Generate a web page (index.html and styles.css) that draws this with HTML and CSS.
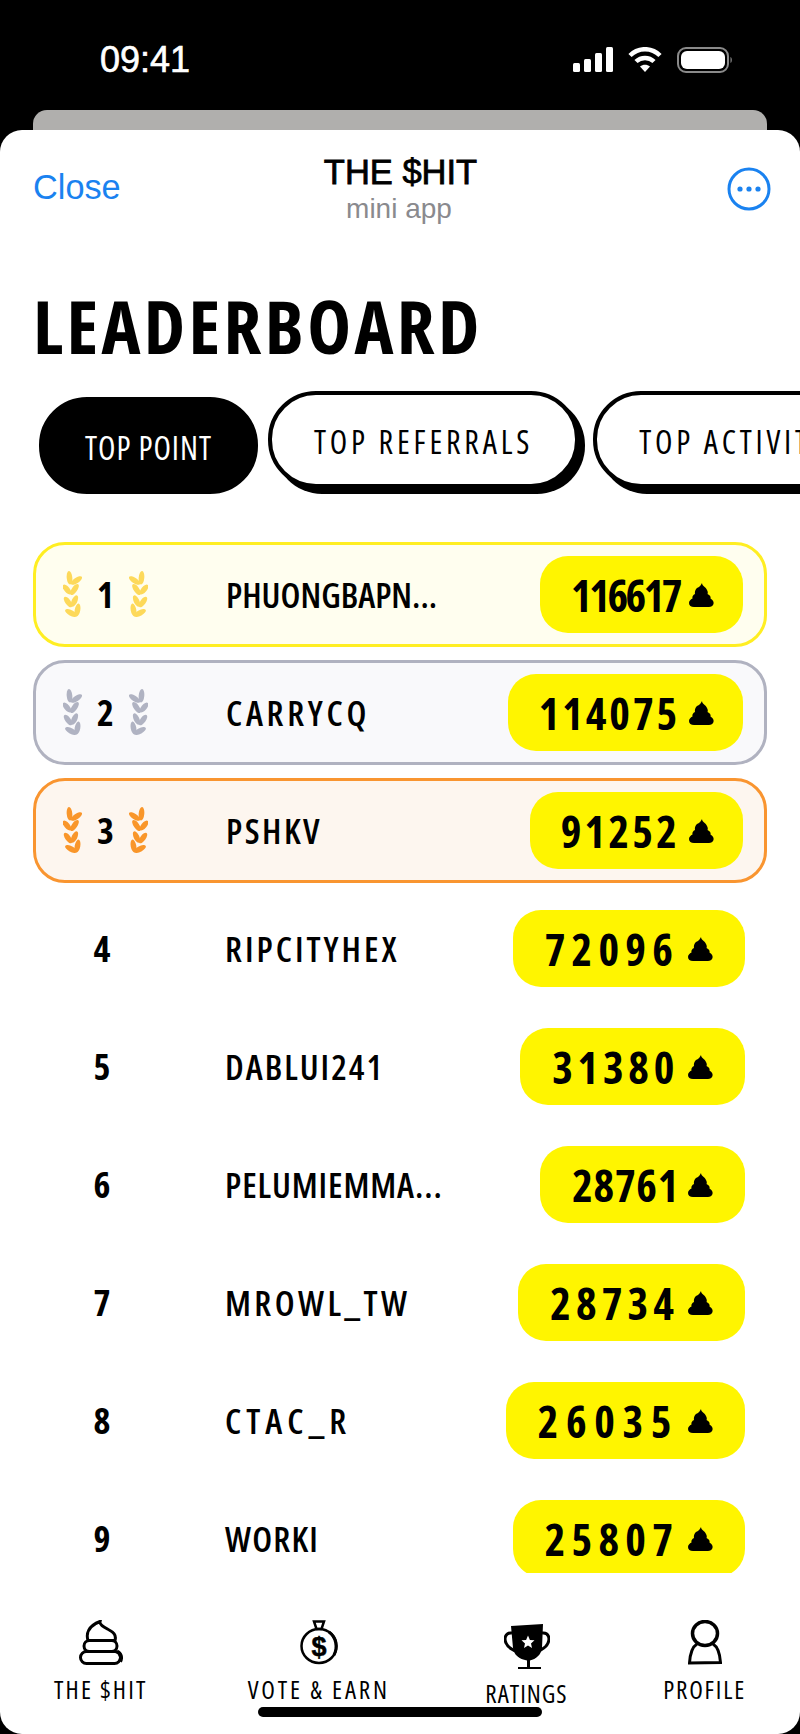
FILE: index.html
```html
<!DOCTYPE html>
<html lang="en">
<head>
<meta charset="utf-8">
<title>THE $HIT – Leaderboard</title>
<link rel="stylesheet" href="styles.css">
</head>
<body>
<svg class="defs" width="0" height="0" aria-hidden="true">
  <symbol id="wheat" viewBox="0 0 19 47">
    <ellipse cx="6.500" cy="6.800" rx="2.800" ry="6.800" transform="rotate(-5 6.500 6.800)"/>
    <ellipse cx="13.500" cy="9.500" rx="2.700" ry="6.500" transform="rotate(55 13.500 9.500)"/>
    <ellipse cx="4" cy="18.500" rx="2.800" ry="6" transform="rotate(-40 4 18.500)"/>
    <ellipse cx="11.500" cy="18.500" rx="2.800" ry="6.500" transform="rotate(35 11.500 18.500)"/>
    <ellipse cx="5" cy="31" rx="2.800" ry="6.200" transform="rotate(-35 5 31)"/>
    <ellipse cx="11.500" cy="30" rx="2.800" ry="6.200" transform="rotate(25 11.500 30)"/>
    <ellipse cx="14.500" cy="39" rx="2.800" ry="6.500" transform="rotate(10 14.500 39)"/>
    <ellipse cx="8" cy="42" rx="2.800" ry="6.500" transform="rotate(-62 8 42)"/>
  </symbol>
  <symbol id="poop" viewBox="0 0 25 24">
    <path d="M13 0C13 3 17 4 18 7C19 9 19 10 18.500 11C21 12 22 14 21.500 15.500C24 17 25 19 24.500 21C24 23 22 24 20 24H5C2 24 0 22.500 0 20C0 18 1.500 16.500 3.500 15.500C3 13.500 4 12 6 11C5.500 8 7 5 10 4C11 3 12 2 13 0Z"/>
  </symbol>
</svg>

<header class="status">
  <span class="time">09:41</span>
  <svg class="status-icons" width="160" height="26" viewBox="0 0 160 26">
    <g fill="#fff">
      <rect x="0" y="16" width="7" height="9" rx="1.500"/>
      <rect x="11" y="12" width="7" height="13" rx="1.500"/>
      <rect x="22" y="6" width="7" height="19" rx="1.500"/>
      <rect x="33" y="0" width="7" height="25" rx="1.500"/>
      <path d="M67 19.500L72 25L77 19.500C74 17 70 17 67 19.500Z"/>
    </g>
    <g fill="none" stroke="#fff" stroke-width="4.500">
      <path d="M57 8.500A21 21 0 0 1 87 8.500"/>
      <path d="M63 14.500A13 13 0 0 1 81 14.500"/>
    </g>
    <rect x="105" y="1" width="50" height="24" rx="8" fill="none" stroke="#8a8a8a" stroke-width="2"/>
    <rect x="108" y="4" width="44" height="18" rx="6" fill="#fff"/>
    <path d="M157.500 10C159 10.500 159.500 15 157.500 16Z" fill="#8a8a8a"/>
  </svg>
</header>
<div class="backcard"></div>

<main class="sheet">
  <div class="topbar">
    <a class="close">Close</a>
    <div class="title-block">
      <div class="title">THE $HIT</div>
      <div class="subtitle">mini app</div>
    </div>
    <svg class="more" width="44" height="44" viewBox="0 0 44 44">
      <circle cx="22" cy="22" r="20" fill="none" stroke="#1a82f0" stroke-width="3"/>
      <circle cx="13" cy="22" r="2.600" fill="#1a82f0"/>
      <circle cx="22" cy="22" r="2.600" fill="#1a82f0"/>
      <circle cx="31" cy="22" r="2.600" fill="#1a82f0"/>
    </svg>
  </div>

  <h1 class="heading">LEADERBOARD</h1>

  <div class="tabs">
    <div class="tab tab-active">TOP POINT</div>
    <div class="tab">TOP REFERRALS</div>
    <div class="tab">TOP ACTIVITY</div>
  </div>

  <div class="list">
    <div class="row row-top row-gold">
      <div class="rank"><svg class="wheat"><use href="#wheat"/></svg><span>1</span><svg class="wheat wheat-flip"><use href="#wheat"/></svg></div>
      <div class="name">PHUONGBAPN...</div>
      <div class="score"><span class="num">116617</span><svg class="coin"><use href="#poop"/></svg></div>
    </div>
    <div class="row row-top row-silver">
      <div class="rank"><svg class="wheat"><use href="#wheat"/></svg><span>2</span><svg class="wheat wheat-flip"><use href="#wheat"/></svg></div>
      <div class="name">CARRYCQ</div>
      <div class="score"><span class="num">114075</span><svg class="coin"><use href="#poop"/></svg></div>
    </div>
    <div class="row row-top row-bronze">
      <div class="rank"><svg class="wheat"><use href="#wheat"/></svg><span>3</span><svg class="wheat wheat-flip"><use href="#wheat"/></svg></div>
      <div class="name">PSHKV</div>
      <div class="score"><span class="num">91252</span><svg class="coin"><use href="#poop"/></svg></div>
    </div>
    <div class="row">
      <div class="rank"><span>4</span></div>
      <div class="name">RIPCITYHEX</div>
      <div class="score"><span class="num">72096</span><svg class="coin"><use href="#poop"/></svg></div>
    </div>
    <div class="row">
      <div class="rank"><span>5</span></div>
      <div class="name">DABLUI241</div>
      <div class="score"><span class="num">31380</span><svg class="coin"><use href="#poop"/></svg></div>
    </div>
    <div class="row">
      <div class="rank"><span>6</span></div>
      <div class="name">PELUMIEMMA...</div>
      <div class="score"><span class="num">28761</span><svg class="coin"><use href="#poop"/></svg></div>
    </div>
    <div class="row">
      <div class="rank"><span>7</span></div>
      <div class="name">MROWL_TW</div>
      <div class="score"><span class="num">28734</span><svg class="coin"><use href="#poop"/></svg></div>
    </div>
    <div class="row">
      <div class="rank"><span>8</span></div>
      <div class="name">CTAC_R</div>
      <div class="score"><span class="num">26035</span><svg class="coin"><use href="#poop"/></svg></div>
    </div>
    <div class="row">
      <div class="rank"><span>9</span></div>
      <div class="name">WORKI</div>
      <div class="score"><span class="num">25807</span><svg class="coin"><use href="#poop"/></svg></div>
    </div>
  </div>

  <nav class="nav">
    <div class="nav-item">
      <svg class="nav-icon" width="44" height="45" viewBox="0 0 44 45" fill="none" stroke="#000" stroke-width="3">
        <path fill="#fff" d="M21 1.500C20 5 27 8 31 10.500C36 13 37 17 36 20.500H9C7 14 9 6 21 1.500Z"/>
        <rect x="5" y="20.500" width="33" height="11" rx="5.500" fill="#fff"/>
        <rect x="1.500" y="31.500" width="40" height="12" rx="6" fill="#fff"/>
        <path d="M38 31.500C42 33 43 38 41 41.500" stroke-width="4"/>
      </svg>
      <span class="nav-label">THE $HIT</span>
    </div>
    <div class="nav-item">
      <svg class="nav-icon" width="40" height="45" viewBox="0 0 40 45" fill="none" stroke="#000" stroke-width="2.500">
        <path d="M15 1.500H25L22.500 9H17.500Z"/>
        <ellipse cx="20" cy="26" rx="17.500" ry="17"/>
        <path d="M30 12C37 17 39 27 35 35" stroke-width="3"/>
        <text class="dollar" x="20" y="36" text-anchor="middle">$</text>
      </svg>
      <span class="nav-label">VOTE &amp; EARN</span>
    </div>
    <div class="nav-item nav-item-low">
      <svg class="nav-icon" width="46" height="45" viewBox="0 0 46 45">
        <path fill="none" stroke="#000" stroke-width="3" d="M8 9C1 8 0 15 2 19C4 24 8 25 11 27M38 9C45 8 46 15 44 19C42 24 38 25 35 27"/>
        <path d="M7 2L39 0L38 24C37 31 32 35 26 36.500V43H37V45H14V43H23V36.500C15 35 10 31 9 24Z"/>
        <path fill="#fff" d="M24 11.500L25.900 15.900L30.500 16.300L27 19.400L28 24L24 21.600L20 24L21 19.400L17.500 16.300L22.100 15.900Z"/>
      </svg>
      <span class="nav-label">RATINGS</span>
    </div>
    <div class="nav-item">
      <svg class="nav-icon" width="34" height="45" viewBox="0 0 34 45" fill="none" stroke="#000" stroke-width="3">
        <ellipse cx="17" cy="13.500" rx="12.500" ry="12" stroke-width="3.500"/>
        <path d="M9 24C4 27 2 35 1.500 43L32.500 42.500C32 35 30 27 25 24"/>
      </svg>
      <span class="nav-label">PROFILE</span>
    </div>
  </nav>
  <div class="home-bar"></div>
</main>
</body>
</html>
```

FILE: styles.css
```css
* { box-sizing: border-box; }

html, body {
  margin: 0;
  padding: 0;
}

body {
  width: 800px;
  height: 1734px;
  background: #000;
  overflow: hidden;
  font-family: "Liberation Sans", Arial, sans-serif;
}

.defs { position: absolute; }

.status {
  height: 110px;
  padding: 47px 67px 0 100px;
  display: flex;
  justify-content: space-between;
  align-items: flex-start;
}

.time {
  color: #fff;
  font-size: 36px;
  line-height: 25px;
  -webkit-text-stroke: 0.6px #fff;
}

.backcard {
  height: 20px;
  margin: 0 33px;
  background: #b0afad;
  border-radius: 14px 14px 0 0;
}

.sheet {
  position: relative;
  height: 1604px;
  background: #fff;
  border-radius: 22px;
  display: flex;
  flex-direction: column;
  overflow: hidden;
}

.topbar {
  height: 100px;
  padding: 23px 32px 0 33px;
  display: grid;
  grid-template-columns: 1fr auto 1fr;
  align-items: start;
}

.close {
  margin-top: 14px;
  font-size: 34.300px;
  line-height: 40px;
  color: #1a82f0;
}

.title-block { text-align: center; }

.title {
  font-size: 34.500px;
  line-height: 38px;
  color: #000;
  -webkit-text-stroke: 0.8px #000;
}

.subtitle {
  margin: 2px 3px 0 0;
  font-size: 28px;
  line-height: 32px;
  color: #8a8a8e;
}

.more {
  margin: 14px -3px 0 0;
  justify-self: end;
}

.heading,
.tab,
.name,
.rank,
.score,
.nav-label {
  font-family: "Open Sans", "Liberation Sans", sans-serif;
  font-stretch: 75%;
}

.heading {
  margin: 58px 0 0 33px;
  font-size: 74px;
  line-height: 76px;
  font-weight: 700;
  letter-spacing: 3.400px;
  color: #000;
}

.tabs {
  margin-top: 27px;
  height: 103px;
  padding-left: 39px;
  display: flex;
  align-items: flex-start;
  gap: 14px;
  overflow: hidden;
  flex: none;
}

.tab {
  flex: none;
  height: 97px;
  padding: 3px 42px 0;
  border: 4px solid #000;
  border-radius: 48px;
  box-shadow: 6px 6px 0 #000;
  background: #fff;
  color: #000;
  font-size: 32px;
  font-weight: 500;
  letter-spacing: 3.800px;
  display: flex;
  align-items: center;
}

.tab-active {
  margin: 6px -4px 0 0;
  padding: 3px 0 0;
  width: 219px;
  background: #000;
  color: #fff;
  box-shadow: none;
  justify-content: center;
  letter-spacing: 1px;
}

.list {
  margin-top: 48px;
  padding: 0 33px;
  flex: 1;
  min-height: 0;
  overflow: hidden;
  display: flex;
  flex-direction: column;
  gap: 13px;
}

.row {
  flex: none;
  height: 105px;
  padding: 0 22px 0 30px;
  display: flex;
  align-items: center;
}

.row-top {
  padding: 0 21px 0 27px;
  border: 3px solid;
  border-radius: 32px;
}

.row-gold { border-color: #ffee22; background: #fffeef; }
.row-silver { border-color: #b0b2c0; background: #f9f9fb; }
.row-bronze { border-color: #f99530; background: #fdf6ef; }

.rank {
  flex: none;
  width: 78px;
  font-size: 36px;
  font-weight: 700;
  color: #000;
  display: flex;
  justify-content: center;
  align-items: center;
}

.row-top .rank {
  width: 85px;
  justify-content: space-between;
}

.wheat {
  width: 19px;
  height: 47px;
  fill: currentColor;
}

.row-gold .wheat { color: #fdd95a; }
.row-silver .wheat { color: #b0b3c2; }
.row-bronze .wheat { color: #f9962a; }

.wheat-flip { transform: scaleX(-1); }

.name {
  margin-left: 84px;
  font-size: 35px;
  font-weight: 600;
  color: #000;
  white-space: nowrap;
}

.row-top .name { margin-left: 78px; }

.score {
  flex: none;
  margin-left: auto;
  height: 77px;
  padding: 0 32px;
  border-radius: 28px;
  background: #fff500;
  color: #000;
  font-size: 44px;
  font-weight: 700;
  display: flex;
  align-items: center;
}

.row-top .score { padding: 0 29px 0 31px; }

.coin {
  margin-left: 9px;
  width: 25px;
  height: 24px;
  fill: #000;
}

/* Hand-lettered widths of the reference: each row has its own tracking. */
.row:nth-child(1) .name { letter-spacing: 0; }
.row:nth-child(2) .name { letter-spacing: 3.700px; }
.row:nth-child(3) .name { letter-spacing: 2.500px; }
.row:nth-child(4) .name { letter-spacing: 3px; }
.row:nth-child(5) .name { letter-spacing: 2px; }
.row:nth-child(6) .name { letter-spacing: 0.900px; }
.row:nth-child(7) .name { letter-spacing: 3.400px; }
.row:nth-child(8) .name { letter-spacing: 5px; }
.row:nth-child(9) .name { letter-spacing: 1.200px; }

.row:nth-child(1) .num { letter-spacing: -2.500px; }
.row:nth-child(2) .num { letter-spacing: 2.900px; }
.row:nth-child(3) .num { letter-spacing: 3.200px; }
.row:nth-child(4) .num { letter-spacing: 6.200px; }
.row:nth-child(5) .num { letter-spacing: 4.700px; }
.row:nth-child(6) .num { letter-spacing: 0.700px; }
.row:nth-child(7) .num { letter-spacing: 5.100px; }
.row:nth-child(8) .num { letter-spacing: 7.600px; }
.row:nth-child(9) .num { letter-spacing: 6.200px; }

.nav {
  flex: none;
  height: 161px;
  padding: 47px 54px 0;
  display: flex;
  justify-content: space-between;
  align-items: flex-start;
}

.nav-item {
  display: flex;
  flex-direction: column;
  align-items: center;
}

.nav-item:nth-child(2) { margin-left: 4.500px; }

.nav-item-low { margin-top: 4px; }

.nav-icon { display: block; }

.dollar {
  font-family: "Liberation Sans", sans-serif;
  font-size: 27px;
  font-weight: 700;
  fill: #000;
  stroke: #000;
  stroke-width: 0.5px;
}

.nav-label {
  margin-top: 11px;
  font-size: 25px;
  font-weight: 500;
  line-height: 26px;
  letter-spacing: 1px;
  color: #000;
  white-space: nowrap;
}

.nav-item:nth-child(1) .nav-label { letter-spacing: 2.200px; }
.nav-item:nth-child(2) .nav-label { letter-spacing: 2.800px; }
.nav-item:nth-child(4) .nav-label { letter-spacing: 1.800px; }

.home-bar {
  position: absolute;
  left: 258px;
  bottom: 17px;
  width: 284px;
  height: 10px;
  border-radius: 5px;
  background: #000;
}
```
